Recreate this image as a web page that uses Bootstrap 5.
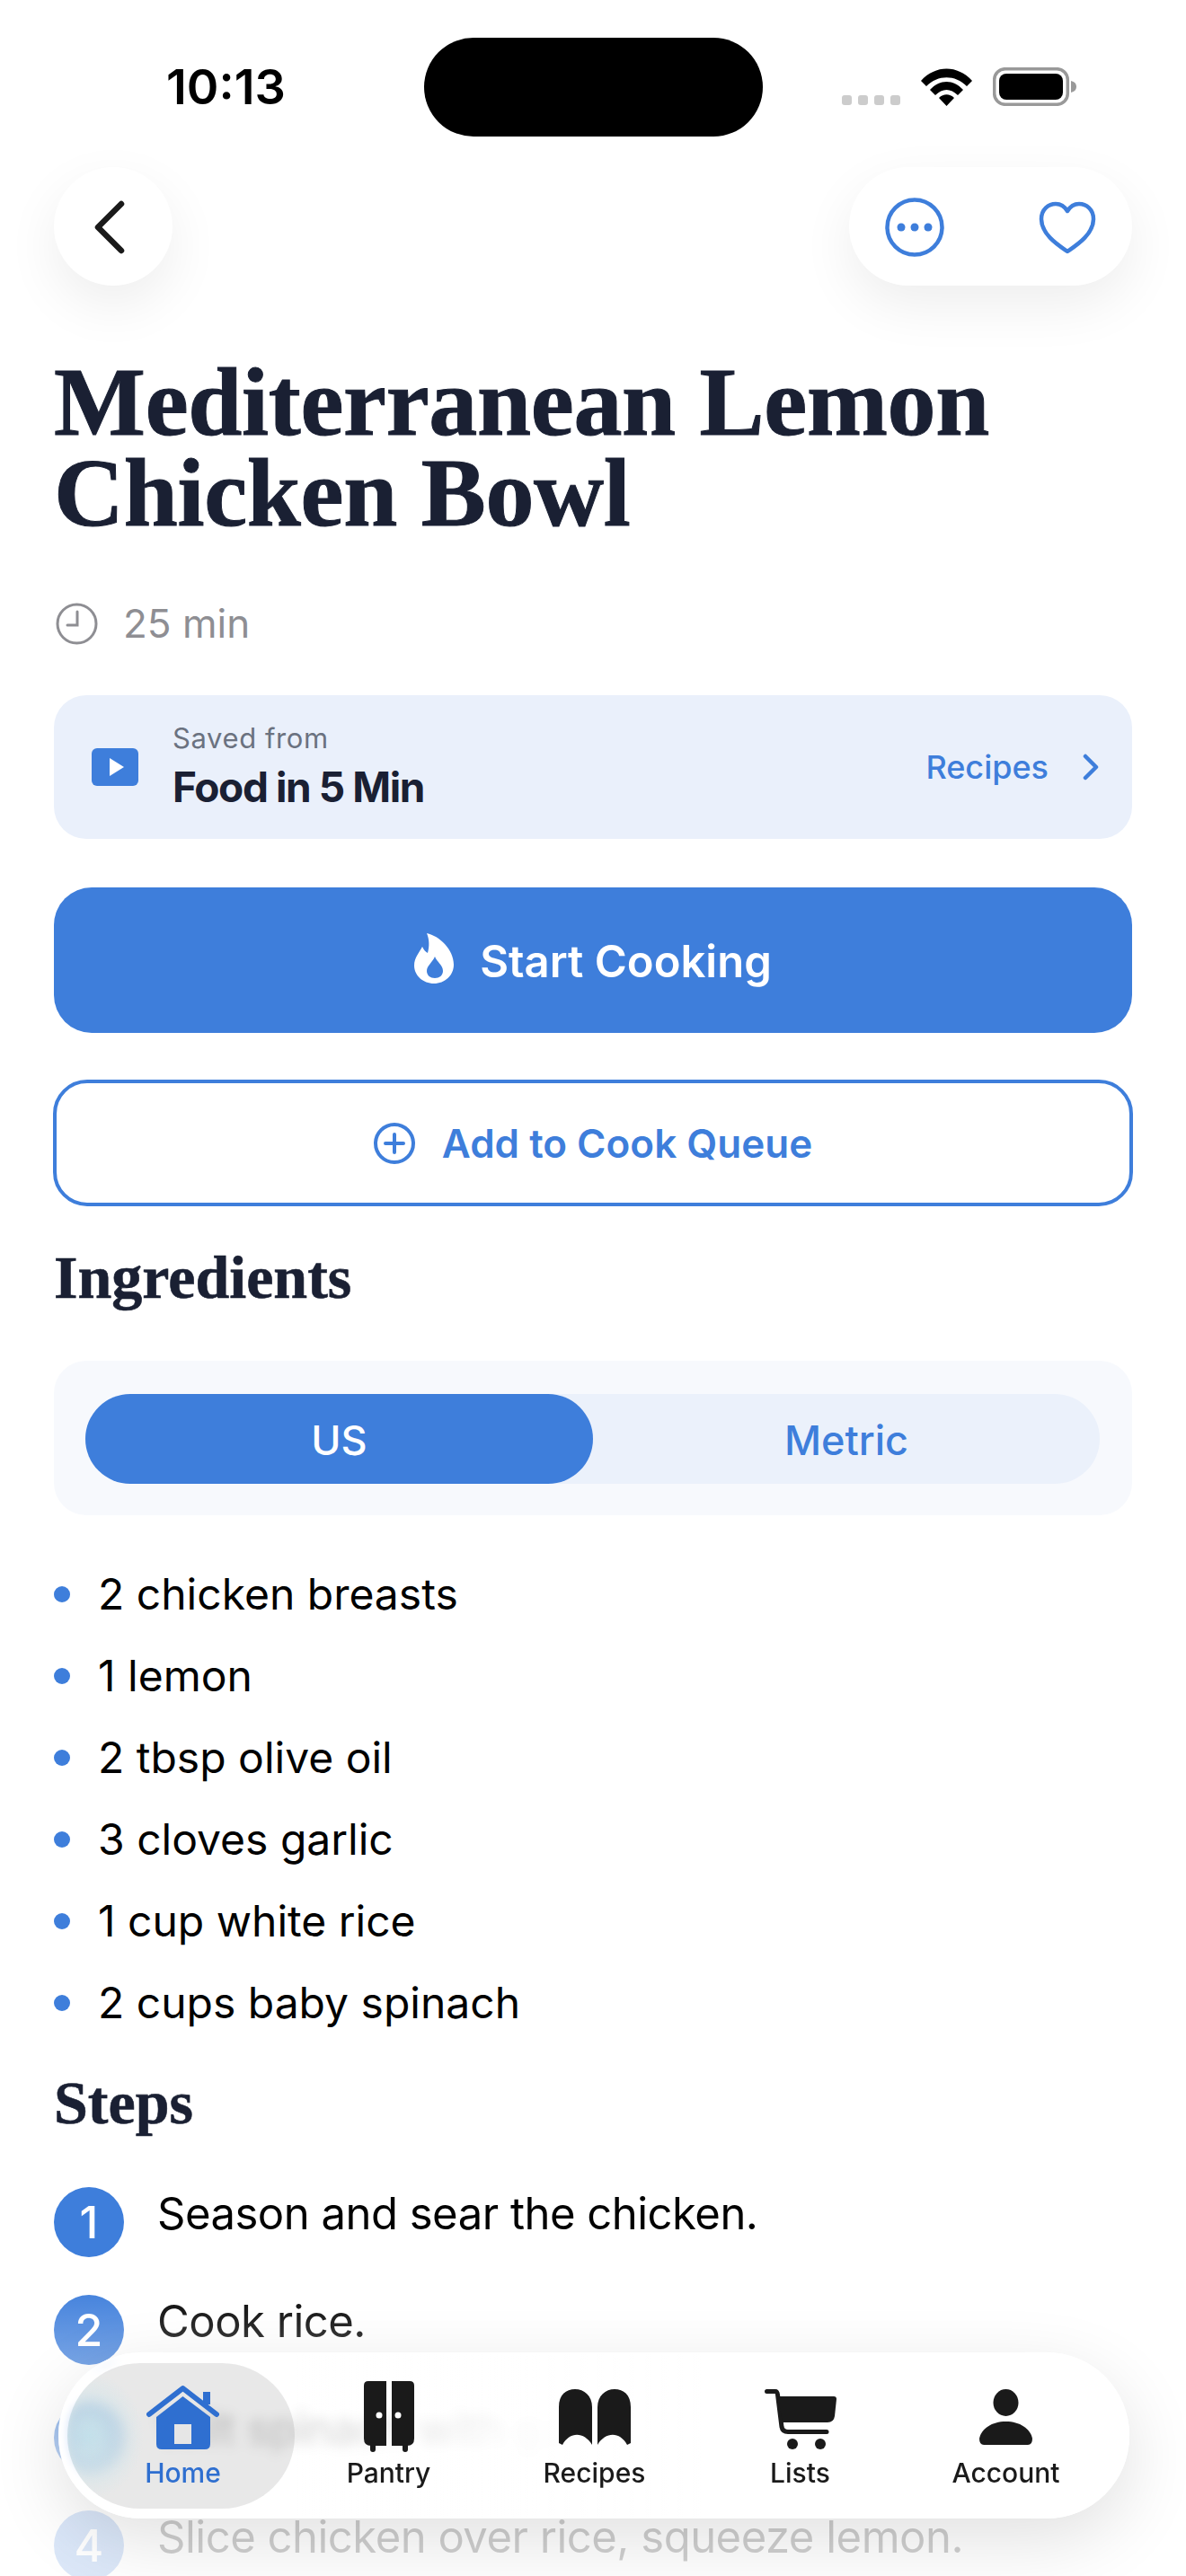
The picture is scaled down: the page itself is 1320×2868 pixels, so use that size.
<!DOCTYPE html>
<html lang="en">
<head>
  <meta charset="UTF-8">
  <title>Mediterranean Lemon Chicken Bowl</title>
  <link href="https://cdn.jsdelivr.net/npm/bootstrap@5.3.0/dist/css/bootstrap.min.css" rel="stylesheet" />
  <style>
    body { background: #fff; font-family: Inter, "Liberation Sans", sans-serif; color: #000; }
    .phone { width: 1320px; height: 2868px; overflow: hidden; }
    .status-row { height: 186px; padding: 75px 122px 0 185px; }
    .status-time { font-size: 54px; font-weight: 600; line-height: 44px; }
    .island { left: 472px; top: 42px; width: 377px; height: 110px; border-radius: 55px; background: #000; }
    .sig-dot { width: 11px; height: 11px; border-radius: 3px; background: #ccc; }
    .sig-row { gap: 7px; margin-right: 23px; padding-bottom: 1px; }
    .page-body { padding: 0 60px; }
    .float-btn { height: 132px; background: #fff; border-radius: 66px; box-shadow: 0 22px 60px rgba(0,0,0,.07); padding-top: 2px; }
    .back-btn { width: 132px; padding-left: 44px; }
    .act-pill { width: 315px; padding-left: 40px; gap: 105px; }
    .dish-title { font-family: "Liberation Serif", serif; font-weight: 700; font-size: 108px; line-height: 101px; color: #1a2033; margin: 79px 0 0; letter-spacing: -.3px; -webkit-text-stroke: 1px #1a2033; }
    .meta-row { height: 60px; margin-top: 65px; padding-left: 2px; gap: 28px; font-size: 44px; color: #8e8e93; }
    .saved-card { height: 160px; margin-top: 50px; padding: 0 36px 0 42px; background: #eaf0fb; border: 0; border-radius: 36px; }
    .saved-small { font-size: 31px; line-height: 38px; color: #6b7280; letter-spacing: .6px; }
    .saved-name { font-size: 46px; line-height: 58px; margin-top: 6px; font-weight: 700; color: #1a2033; letter-spacing: -1.4px; }
    .saved-link { font-size: 36px; font-weight: 500; color: #3e7edb; gap: 37px; }
    .main-btn { height: 162px; margin-top: 54px; padding-top: 10px; background: #3e7edb; border: 0; border-radius: 42px; color: #fff; font-size: 49px; font-weight: 600; gap: 29px; }
    .main-btn:hover { background: #3e7edb; color: #fff; }
    .queue-btn { width: 1202px; height: 141px; margin: 52px -1px 0; background: #fff; border: 4px solid #3e7edb; border-radius: 38px; color: #3e7edb; font-size: 44px; font-weight: 600; gap: 30px; }
    .queue-btn:hover { background: #fff; color: #3e7edb; }
    .sect-head { font-family: "Liberation Serif", serif; font-weight: 700; font-size: 68px; line-height: 80px; color: #1a2033; margin: 0; -webkit-text-stroke: .6px #1a2033; }
    .seg-wrap { height: 172px; margin-top: 53px; padding: 37px 36px 35px 35px; background: #f7f9fd; border-radius: 36px; }
    .seg-track { height: 100px; background: #ebf1fb; border-radius: 50px; font-size: 45px; font-weight: 500; color: #3e7edb; }
    .seg-on { width: 565px; padding-top: 3px; background: #3e7edb; color: #fff; border-radius: 50px; }
    .seg-off { flex: 1; padding-top: 3px; }
    .ingr-list { margin-top: 42px; }
    .ingr-item { height: 91px; font-size: 48px; gap: 31px; }
    .ingr-dot { width: 18px; height: 18px; border-radius: 50%; background: #3e7edb; }
    .step-row { height: 78px; margin-bottom: 42px; gap: 37px; font-size: 49px; line-height: 60px; letter-spacing: -.5px; }
    .step-num { width: 78px; height: 78px; flex: none; border-radius: 50%; background: #3e7edb; color: #fff; font-size: 50px; font-weight: 500; line-height: 78px; text-align: center; letter-spacing: 0; }
    .fade-over { left: 0; right: 0; top: 2540px; bottom: 0; background: linear-gradient(to bottom, rgba(255,255,255,0), rgba(255,255,255,.8) 75%, rgba(255,255,255,.82)); }
    .tab-bar { left: 65px; top: 2619px; width: 1192px; height: 185px; border-radius: 92px; background: linear-gradient(to right, rgba(255,255,255,.55) 0, rgba(255,255,255,.55) 22%, rgba(255,255,255,.96) 45%, #fff 60%); backdrop-filter: blur(7px); box-shadow: 0 24px 80px rgba(0,0,0,.12), inset 10px 0 10px #fff; padding-left: 24px; }
    .tab-on-bg { left: 10px; top: 12px; width: 253px; height: 162px; border-radius: 81px; background: radial-gradient(ellipse 60px 70px at 25px 50%, rgba(190,226,236,.75), rgba(190,226,236,0)), rgba(0,0,0,.09); }
    .tab-cell { width: 229px; height: 185px; padding-top: 29px; font-size: 30px; font-weight: 500; color: #1a1a1a; }
    .tab-ico { height: 82px; }
    .tab-lab { line-height: 36px; margin-top: 5px; }
    .tab-cell.is-on { color: #2f6fd0; }
  </style>
</head>
<body>
  <div class="phone position-relative">
    <div class="status-row d-flex justify-content-between align-items-start">
      <div class="status-time">10:13</div>
      <div class="d-flex align-items-end">
        <div class="d-flex sig-row">
          <div class="sig-dot"></div><div class="sig-dot"></div><div class="sig-dot"></div><div class="sig-dot"></div>
        </div>
        <svg width="57" height="42" viewBox="0 0 57 42" style="margin-right:23px"><path d="M0 14 C16 -4 41 -4 57 14 L51 20 C38 7 19 7 6 20Z M10 24 C21 12 36 12 47 24 L41 30 C33 22 24 22 16 30Z M20 33 C25 28 32 28 37 33 L28.500 42Z" fill="#000"/></svg>
        <svg width="93" height="43" viewBox="0 0 93 43"><rect x="1.700" y="1.700" width="81.600" height="39.600" rx="12" fill="#fff" stroke="#999" stroke-width="3.500"/><rect x="7" y="7" width="71" height="29" rx="8" fill="#000"/><path d="M87 15 C91 16 93 18 93 21.500 C93 25 91 27 87 28Z" fill="#999"/></svg>
      </div>
    </div>
    <div class="island position-absolute"></div>

    <div class="page-body">
      <div class="d-flex justify-content-between">
        <div class="float-btn back-btn d-flex align-items-center">
          <svg width="36" height="60" viewBox="0 0 36 60"><path d="M31 4 L5 30 L31 56" fill="none" stroke="#1a1a1a" stroke-width="6.500" stroke-linecap="round" stroke-linejoin="round"/></svg>
        </div>
        <div class="float-btn act-pill d-flex align-items-center">
          <svg width="66" height="66" viewBox="0 0 66 66"><circle cx="33" cy="33" r="30.500" fill="none" stroke="#3e7edb" stroke-width="4.500"/><circle cx="18" cy="33" r="4.500" fill="#3e7edb"/><circle cx="33" cy="33" r="4.500" fill="#3e7edb"/><circle cx="48" cy="33" r="4.500" fill="#3e7edb"/></svg>
          <svg width="64" height="59" viewBox="0 0 64 59"><path d="M32 56 C22 49 3 37 3 20 C3 9 11 3 19 3 C25 3 29 6 32 11 C35 6 39 3 45 3 C53 3 61 9 61 20 C61 37 42 49 32 56Z" fill="none" stroke="#3e7edb" stroke-width="4.500" stroke-linejoin="round"/></svg>
        </div>
      </div>

      <h1 class="dish-title">Mediterranean Lemon<br>Chicken Bowl</h1>

      <div class="meta-row d-flex align-items-center">
        <svg width="47" height="47" viewBox="0 0 47 47"><circle cx="23.500" cy="23.500" r="21.500" fill="none" stroke="#8e8e93" stroke-width="3"/><path d="M24 10 V25 H13" fill="none" stroke="#8e8e93" stroke-width="3" stroke-linecap="round"/></svg>
        <span>25 min</span>
      </div>

      <div class="card saved-card flex-row align-items-center justify-content-between">
        <div class="d-flex align-items-center" style="gap:38px">
          <svg width="52" height="42" viewBox="0 0 52 42"><rect width="52" height="42" rx="6" fill="#3e7edb"/><path d="M20 11 L36 21 L20 31Z" fill="#fff"/></svg>
          <div>
            <div class="saved-small">Saved from</div>
            <div class="saved-name">Food in 5 Min</div>
          </div>
        </div>
        <div class="saved-link d-flex align-items-center">
          <span>Recipes</span>
          <svg width="20" height="30" viewBox="0 0 20 30"><path d="M4 3 L16 15 L4 27" fill="none" stroke="#3e7edb" stroke-width="4.500" stroke-linecap="round" stroke-linejoin="round"/></svg>
        </div>
      </div>

      <button type="button" class="btn main-btn w-100 d-flex align-items-center justify-content-center">
        <svg width="44" height="56" viewBox="0 0 44 56" style="margin-top:-8px"><path d="M14 0 C28 3 44 18 44 35 C44 47 34 56 22 56 C10 56 0 47 0 36 C0 27 6 21 9 15 C11 19 13 21 15 22 C17 15 17 7 14 0Z" fill="#fff"/><path d="M23 26 C25 32 32 35 32 42 C32 47 28 50 23 50 C18 50 14 47 14 42 C14 36 20 33 23 26Z" fill="#3e7edb"/></svg>
        <span>Start Cooking</span>
      </button>

      <button type="button" class="btn queue-btn d-flex align-items-center justify-content-center">
        <svg width="46" height="46" viewBox="0 0 46 46"><circle cx="23" cy="23" r="21" fill="none" stroke="#3e7edb" stroke-width="4"/><path d="M23 13 V33 M13 23 H33" stroke="#3e7edb" stroke-width="4" stroke-linecap="round"/></svg>
        <span>Add to Cook Queue</span>
      </button>

      <h2 class="sect-head" style="margin-top:39px">Ingredients</h2>

      <div class="seg-wrap">
        <div class="seg-track d-flex align-items-center text-center">
          <div class="seg-on h-100 d-flex align-items-center justify-content-center">US</div>
          <div class="seg-off">Metric</div>
        </div>
      </div>

      <ul class="ingr-list list-unstyled mb-0">
        <li class="ingr-item d-flex align-items-center"><span class="ingr-dot"></span>2 chicken breasts</li>
        <li class="ingr-item d-flex align-items-center"><span class="ingr-dot"></span>1 lemon</li>
        <li class="ingr-item d-flex align-items-center"><span class="ingr-dot"></span>2 tbsp olive oil</li>
        <li class="ingr-item d-flex align-items-center"><span class="ingr-dot"></span>3 cloves garlic</li>
        <li class="ingr-item d-flex align-items-center"><span class="ingr-dot"></span>1 cup white rice</li>
        <li class="ingr-item d-flex align-items-center"><span class="ingr-dot"></span>2 cups baby spinach</li>
      </ul>

      <h2 class="sect-head" style="margin-top:26px">Steps</h2>

      <div style="margin-top:54px">
        <div class="step-row d-flex"><div class="step-num">1</div><div>Season and sear the chicken.</div></div>
        <div class="step-row d-flex"><div class="step-num">2</div><div>Cook rice.</div></div>
        <div class="step-row d-flex"><div class="step-num">3</div><div>Wilt spinach with garlic.</div></div>
        <div class="step-row d-flex"><div class="step-num">4</div><div>Slice chicken over rice, squeeze lemon.</div></div>
      </div>
    </div>

    <div class="fade-over position-absolute"></div>

    <div class="tab-bar position-absolute d-flex">
      <div class="tab-on-bg position-absolute"></div>
      <div class="tab-cell is-on d-flex flex-column align-items-center position-relative">
        <div class="tab-ico d-flex align-items-end" style="padding-bottom:3px">
          <svg width="81" height="72" viewBox="0 0 81 72"><path d="M63 8 H71 V22 H63Z" fill="#2f6fd0"/><path d="M3 32 L40.500 3 L78 32" transform="translate(0 1)" fill="none" stroke="#2f6fd0" stroke-width="6" stroke-linecap="round" stroke-linejoin="round"/><path d="M11 36 L40.500 13 L71 36 V66 Q71 72 65 72 H17 Q11 72 11 66Z" fill="#2f6fd0"/><rect x="31" y="44" width="19" height="22" fill="#e6e6e6"/></svg>
        </div>
        <div class="tab-lab">Home</div>
      </div>
      <div class="tab-cell d-flex flex-column align-items-center">
        <div class="tab-ico d-flex align-items-end">
          <svg width="56" height="79" viewBox="0 0 56 79"><path d="M5 0 H25 V72 H8 Q0 72 0 64 V5 Q0 0 5 0Z M31 0 H51 Q56 0 56 5 V64 Q56 72 48 72 H31Z" fill="#1a1a1a"/><rect x="7" y="68" width="6" height="11" rx="3" fill="#1a1a1a"/><rect x="43" y="68" width="6" height="11" rx="3" fill="#1a1a1a"/><circle cx="17" cy="38" r="3.500" fill="#fff"/><circle cx="38" cy="38" r="3.500" fill="#fff"/></svg>
        </div>
        <div class="tab-lab">Pantry</div>
      </div>
      <div class="tab-cell d-flex flex-column align-items-center">
        <div class="tab-ico d-flex align-items-end" style="padding-bottom:7px">
          <svg width="80" height="63" viewBox="0 0 80 63"><path d="M0 20 C0 6 8 0 18 0 C28 0 37 7 37 20 V62 C28 47 12 47 4 62 L0 60Z M43 20 C43 7 52 0 62 0 C72 0 80 6 80 20 V60 L76 62 C68 47 52 47 43 62Z" fill="#1a1a1a"/></svg>
        </div>
        <div class="tab-lab">Recipes</div>
      </div>
      <div class="tab-cell d-flex flex-column align-items-center">
        <div class="tab-ico d-flex align-items-end" style="padding-bottom:3px">
          <svg width="80" height="67" viewBox="0 0 80 67"><path d="M2.500 2.500 H12 Q14 2.500 14.500 6 L19 42 Q20 47.500 26 47.500 H69" fill="none" stroke="#1a1a1a" stroke-width="5" stroke-linecap="round" stroke-linejoin="round"/><path d="M15 8 H77 Q80 8 80 11 L78 30 Q77 37 70 37 H20Z" fill="#1a1a1a"/><ellipse cx="31" cy="61" rx="6" ry="6" fill="#1a1a1a"/><ellipse cx="62" cy="61" rx="6" ry="6" fill="#1a1a1a"/></svg>
        </div>
        <div class="tab-lab">Lists</div>
      </div>
      <div class="tab-cell d-flex flex-column align-items-center">
        <div class="tab-ico d-flex align-items-end" style="padding-bottom:8px">
          <svg width="59" height="62" viewBox="0 0 59 62"><ellipse cx="29.500" cy="15" rx="14" ry="15" fill="#1a1a1a"/><path d="M0 55 C2 44 14 36 29.500 36 C45 36 57 44 59 55 Q59 62 54 62 H5 Q0 62 0 55Z" fill="#1a1a1a"/></svg>
        </div>
        <div class="tab-lab">Account</div>
      </div>
    </div>
  </div>
  <script src="https://cdn.jsdelivr.net/npm/bootstrap@5.3.0/dist/js/bootstrap.bundle.min.js"></script>
</body>
</html>
